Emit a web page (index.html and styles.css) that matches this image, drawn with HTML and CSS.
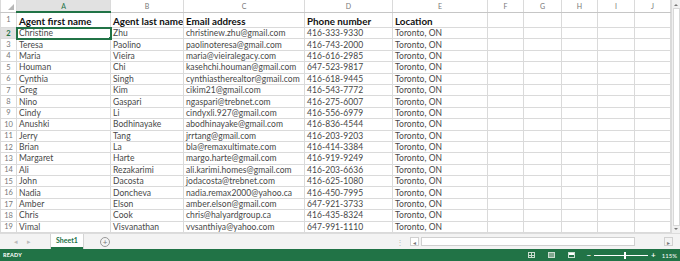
FILE: index.html
```html
<!DOCTYPE html>
<html lang="en">
<head>
    <meta charset="UTF-8">
    <title>Agents - Excel</title>
    <link rel="stylesheet" href="styles.css">
</head>
<body>
    <div class="sheet-area">
        <table class="grid">
            <colgroup>
                <col style="width:16px"><col style="width:94px"><col style="width:73px"><col style="width:121px">
                <col style="width:88px"><col style="width:95px"><col style="width:36px"><col style="width:38px">
                <col style="width:36px"><col style="width:37px"><col style="width:36px">
            </colgroup>
            <thead>
                <tr class="col-heads">
                    <th class="corner"><span class="corner-tri"></span></th>
                    <th class="active">A</th><th>B</th><th>C</th><th>D</th><th>E</th>
                    <th>F</th><th>G</th><th>H</th><th>I</th><th>J</th>
                </tr>
            </thead>
            <tbody id="rows">
                <tr class="title-row">
                    <th>1</th>
                    <td>Agent first name</td><td>Agent last name</td><td>Email address</td>
                    <td>Phone number</td><td>Location</td><td></td><td></td><td></td><td></td><td></td>
                </tr>
            </tbody>
        </table>
        <div class="vscroll">
            <span class="arrow up"></span>
            <span class="vthumb"></span>
            <span class="arrow down"></span>
        </div>
    </div>

    <div class="tab-bar">
        <span class="nav">&#9666;</span>
        <span class="nav">&#9656;</span>
        <span class="sheet-tab">Sheet1</span>
        <span class="add-sheet">+</span>
        <span class="spacer"></span>
        <span class="split">&#8942;</span>
        <div class="hscroll">
            <span class="harrow">&#9666;</span>
            <span class="hthumb"></span>
            <span class="harrow right">&#9656;</span>
        </div>
    </div>

    <div class="status-bar">
        <span class="ready">READY</span>
        <span class="spacer"></span>
        <span class="view-icon normal"></span>
        <span class="view-icon layout"></span>
        <span class="view-icon pagebreak"></span>
        <div class="zoom">
            <span class="zoom-btn">&minus;</span>
            <span class="slider"><span class="knob"></span></span>
            <span class="zoom-btn">+</span>
        </div>
        <span class="zoom-pct">115%</span>
    </div>

    <script>
        const agents = [
            ['Christine', 'Zhu', 'christinew.zhu@gmail.com', '416-333-9330'],
            ['Teresa', 'Paolino', 'paolinoteresa@gmail.com', '416-743-2000'],
            ['Maria', 'Vieira', 'maria@vieiralegacy.com', '416-616-2985'],
            ['Houman', 'Chi', 'kasehchi.houman@gmail.com', '647-523-9817'],
            ['Cynthia', 'Singh', 'cynthiastherealtor@gmail.com', '416-618-9445'],
            ['Greg', 'Kim', 'cikim21@gmail.com', '416-543-7772'],
            ['Nino', 'Gaspari', 'ngaspari@trebnet.com', '416-275-6007'],
            ['Cindy', 'Li', 'cindyxli.927@gmail.com', '416-556-6979'],
            ['Anushki', 'Bodhinayake', 'abodhinayake@gmail.com', '416-836-4544'],
            ['Jerry', 'Tang', 'jrrtang@gmail.com', '416-203-9203'],
            ['Brian', 'La', 'bla@remaxultimate.com', '416-414-3384'],
            ['Margaret', 'Harte', 'margo.harte@gmail.com', '416-919-9249'],
            ['Ali', 'Rezakarimi', 'ali.karimi.homes@gmail.com', '416-203-6636'],
            ['John', 'Dacosta', 'jodacosta@trebnet.com', '416-625-1080'],
            ['Nadia', 'Doncheva', 'nadia.remax2000@yahoo.ca', '416-450-7995'],
            ['Amber', 'Elson', 'amber.elson@gmail.com', '647-921-3733'],
            ['Chris', 'Cook', 'chris@halyardgroup.ca', '416-435-8324'],
            ['Vimal', 'Visvanathan', 'vvsanthiya@yahoo.com', '647-991-1110']
        ];

        const body = document.getElementById('rows');
        agents.forEach((a, i) => {
            const tr = document.createElement('tr');
            tr.className = 'data-row';
            const rowNum = i + 2;
            tr.innerHTML = `
                <th class="${rowNum === 2 ? 'active' : ''}">${rowNum}</th>
                <td class="${rowNum === 2 ? 'selected' : ''}">${a[0]}${rowNum === 2 ? '<span class="handle"></span>' : ''}</td>
                <td>${a[1]}</td><td>${a[2]}</td><td>${a[3]}</td><td>Toronto, ON</td>
                <td></td><td></td><td></td><td></td><td></td>
            `;
            body.appendChild(tr);
        });
    </script>
</body>
</html>
```

FILE: styles.css
```css
html, body {
    margin: 0;
    height: 261px;
    overflow: hidden;
    background: #fff;
    font-family: Lato, "Open Sans", sans-serif;
}
.sheet-area {
    display: flex;
    height: 233px;
    overflow: hidden;
}
.grid {
    border-collapse: collapse;
    table-layout: fixed;
    width: 670px;
    flex: none;
}
.grid th, .grid td {
    border: 1px solid #dadada;
    padding: 0 2px;
    white-space: nowrap;
    overflow: hidden;
    box-sizing: border-box;
}
.col-heads th {
    height: 12px;
    font-size: 7px;
    font-weight: normal;
    color: #777;
    text-align: center;
    background: #fff;
    border-color: #dadada;
    border-top: none;
    border-bottom: 1px solid #c6c6c6;
}
.col-heads th.active {
    background: #e1e1e1;
    color: #217346;
    border-bottom: 2px solid #217346;
}
.corner {
    position: relative;
}
.corner-tri {
    position: absolute;
    right: 2px;
    bottom: 2px;
    border-style: solid;
    border-width: 0 0 6px 6px;
    border-color: transparent transparent #b7b7b7 transparent;
}
tbody th {
    font-size: 7.5px;
    font-weight: normal;
    color: #777;
    text-align: center;
    padding: 0;
    border-left: none;
    border-right: 1px solid #c6c6c6;
}
tbody th.active {
    background: #e1e1e1;
    color: #217346;
    font-weight: bold;
}
.title-row {
    height: 15px;
}
.title-row td {
    font-size: 9.8px;
    font-weight: bold;
    color: #111;
    padding-top: 2px;
}
.data-row {
    height: 11.4px;
}
.data-row td {
    font-size: 8.5px;
    color: #474747;
    line-height: 10px;
    letter-spacing: 0.05px;
}
td.selected {
    position: relative;
    outline: 2px solid #217346;
    outline-offset: -1px;
}
.handle {
    position: absolute;
    right: -2px;
    bottom: -2px;
    width: 4px;
    height: 4px;
    background: #217346;
    border: 1px solid #fff;
    box-sizing: border-box;
}
.vscroll {
    flex: 1;
    display: flex;
    flex-direction: column;
    align-items: center;
    background: #f0f0f0;
    border-left: 1px solid #dadada;
    padding: 2px 0;
    box-sizing: border-box;
}
.vthumb {
    flex: 1;
    width: 7px;
    margin: 2px 0;
    background: #fff;
    border: 1px solid #d8d8d8;
    box-sizing: border-box;
}
.arrow {
    width: 0;
    height: 0;
    border-left: 2px solid transparent;
    border-right: 2px solid transparent;
}
.arrow.up {
    border-bottom: 2px solid #777;
    margin-top: 2px;
}
.arrow.down {
    border-top: 2px solid #777;
    margin-bottom: 1px;
}
.tab-bar {
    height: 16px;
    display: flex;
    align-items: center;
    background: #f3f3f3;
    border-top: 1px solid #dcdcdc;
    box-sizing: border-box;
    font-size: 7px;
    color: #bbb;
}
.nav {
    width: 13px;
    text-align: center;
    margin-left: 9px;
}
.nav + .nav {
    margin-left: 0;
}
.sheet-tab {
    margin-left: 16px;
    width: 32px;
    height: 15px;
    line-height: 13px;
    text-align: center;
    background: #fff;
    color: #217346;
    font-weight: bold;
    font-size: 7px;
    border-bottom: 2px solid #217346;
    box-shadow: 1px 0 0 #d4d4d4, -1px 0 0 #d4d4d4;
    box-sizing: border-box;
}
.add-sheet {
    margin-left: 17px;
    width: 8px;
    height: 8px;
    border: 1px solid #999;
    border-radius: 50%;
    color: #777;
    font-size: 8px;
    line-height: 8px;
    text-align: center;
}
.spacer {
    flex: 1;
}
.split {
    color: #bbb;
    margin-right: 6px;
    font-size: 8px;
}
.hscroll {
    display: flex;
    align-items: center;
    width: 264px;
    height: 10px;
    margin-right: 6px;
}
.harrow {
    width: 9px;
    height: 9px;
    font-size: 6px;
    line-height: 9px;
    text-align: center;
    color: #777;
    background: #fff;
    border: 1px solid #d0d0d0;
    box-sizing: border-box;
}
.hthumb {
    width: 214px;
    height: 9px;
    margin-left: 2px;
    margin-right: 29px;
    background: #fff;
    border: 1px solid #d0d0d0;
    box-sizing: border-box;
}
.harrow.right {
    background: #f3f3f3;
}
.status-bar {
    height: 12px;
    display: flex;
    align-items: center;
    background: #217346;
    color: #fff;
    padding: 0 3px;
}
.ready {
    font-size: 5.5px;
    font-weight: bold;
    letter-spacing: 0.2px;
}
.view-icon {
    width: 7px;
    height: 6px;
    margin-right: 13px;
    box-sizing: border-box;
    border: 1px solid #c9dccf;
}
.view-icon.normal {
    background:
        linear-gradient(#c9dccf, #c9dccf) 0 2px / 100% 1px no-repeat,
        linear-gradient(#c9dccf, #c9dccf) 2px 0 / 1px 100% no-repeat;
}
.view-icon.layout {
    background: #7fa78e;
}
.view-icon.pagebreak {
    background: linear-gradient(#fff, #fff) 0 0 / 100% 2px no-repeat;
    margin-right: 11px;
}
.zoom {
    display: flex;
    align-items: center;
}
.zoom-btn {
    font-size: 8px;
    font-weight: bold;
    line-height: 8px;
}
.slider {
    position: relative;
    width: 54px;
    height: 1px;
    margin: 0 3px;
    background: #fff;
}
.knob {
    position: absolute;
    left: 30px;
    top: -3px;
    width: 2px;
    height: 7px;
    background: #fff;
}
.zoom-pct {
    font-size: 6px;
    margin-left: 6px;
    margin-right: 0;
}
```
